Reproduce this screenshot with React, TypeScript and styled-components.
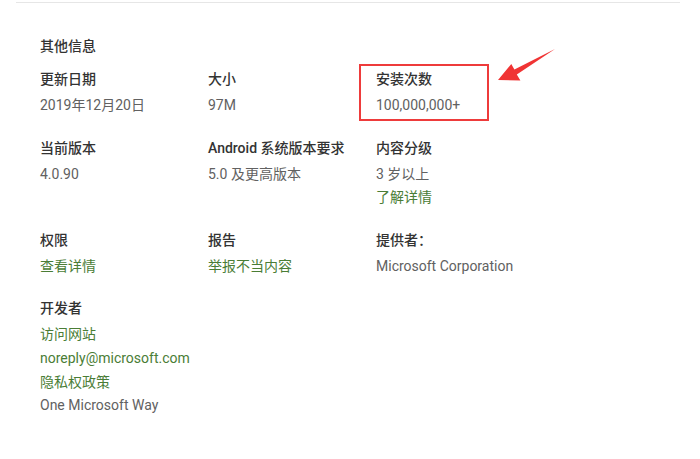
import styled, { createGlobalStyle } from "styled-components";

const GlobalStyle = createGlobalStyle`
  html, body {
    margin: 0;
    padding: 0;
    background: #ffffff;
  }
  body {
    font-family: Roboto, "Noto Sans CJK SC", sans-serif;
    font-size: 14px;
  }
`;

const Panel = styled.section`
  position: relative;
  margin: 2px 20px 0 16px;
  padding: 31px 24px 40px;
  border-top: 1px solid #e6e6e6;
  height: 389px;
`;

const Title = styled.h2`
  margin: 0 0 9px;
  font-size: 14px;
  line-height: 24px;
  font-weight: 500;
  color: #333333;
`;

const Grid = styled.div`
  display: grid;
  grid-template-columns: repeat(3, 168px);
  row-gap: 18px;
`;

const Cell = styled.div`
  position: relative;
  display: flex;
  flex-direction: column;
`;

const Label = styled.div`
  margin-bottom: 3px;
  line-height: 24px;
  font-weight: 500;
  color: #333333;
  white-space: nowrap;
`;

const Value = styled.div<{ $link?: boolean }>`
  line-height: 23.6px;
  color: ${({ $link }) => ($link ? "#4a7d36" : "#616161")};
  white-space: nowrap;
`;

const Highlight = styled.div`
  position: absolute;
  left: -17px;
  top: -3px;
  width: 126px;
  height: 53px;
  border: 2px solid #ee3b3b;
  pointer-events: none;
`;

const Arrow = styled.svg`
  position: absolute;
  left: 480px;
  top: 44px;
  overflow: visible;
`;

type Line = { text: string; link?: boolean };
type Item = { label: string; lines: Line[]; marked?: boolean };

const items: Item[] = [
  { label: "更新日期", lines: [{ text: "2019年12月20日" }] },
  { label: "大小", lines: [{ text: "97M" }] },
  { label: "安装次数", lines: [{ text: "100,000,000+" }], marked: true },
  { label: "当前版本", lines: [{ text: "4.0.90" }] },
  { label: "Android 系统版本要求", lines: [{ text: "5.0 及更高版本" }] },
  {
    label: "内容分级",
    lines: [{ text: "3 岁以上" }, { text: "了解详情", link: true }],
  },
  { label: "权限", lines: [{ text: "查看详情", link: true }] },
  { label: "报告", lines: [{ text: "举报不当内容", link: true }] },
  { label: "提供者：", lines: [{ text: "Microsoft Corporation" }] },
  {
    label: "开发者",
    lines: [
      { text: "访问网站", link: true },
      { text: "noreply@microsoft.com", link: true },
      { text: "隐私权政策", link: true },
      { text: "One Microsoft Way" },
    ],
  },
];

export default function App() {
  return (
    <>
      <GlobalStyle />
      <Panel>
        <Title>其他信息</Title>
        <Grid>
          {items.map((item) => (
            <Cell key={item.label}>
              <Label>{item.label}</Label>
              {item.lines.map((line) => (
                <Value key={line.text} $link={line.link}>
                  {line.text}
                </Value>
              ))}
              {item.marked && <Highlight />}
            </Cell>
          ))}
        </Grid>
        {/* annotation arrow, coordinates relative to the panel */}
        <Arrow width="60" height="36" viewBox="480 44 60 36">
          <polygon
            points="482,33 495.3,17 498.4,22.6 539,2 500.8,27.4 504.4,33.4"
            fill="#f03434"
            transform="translate(0 44)"
          />
        </Arrow>
      </Panel>
    </>
  );
}
